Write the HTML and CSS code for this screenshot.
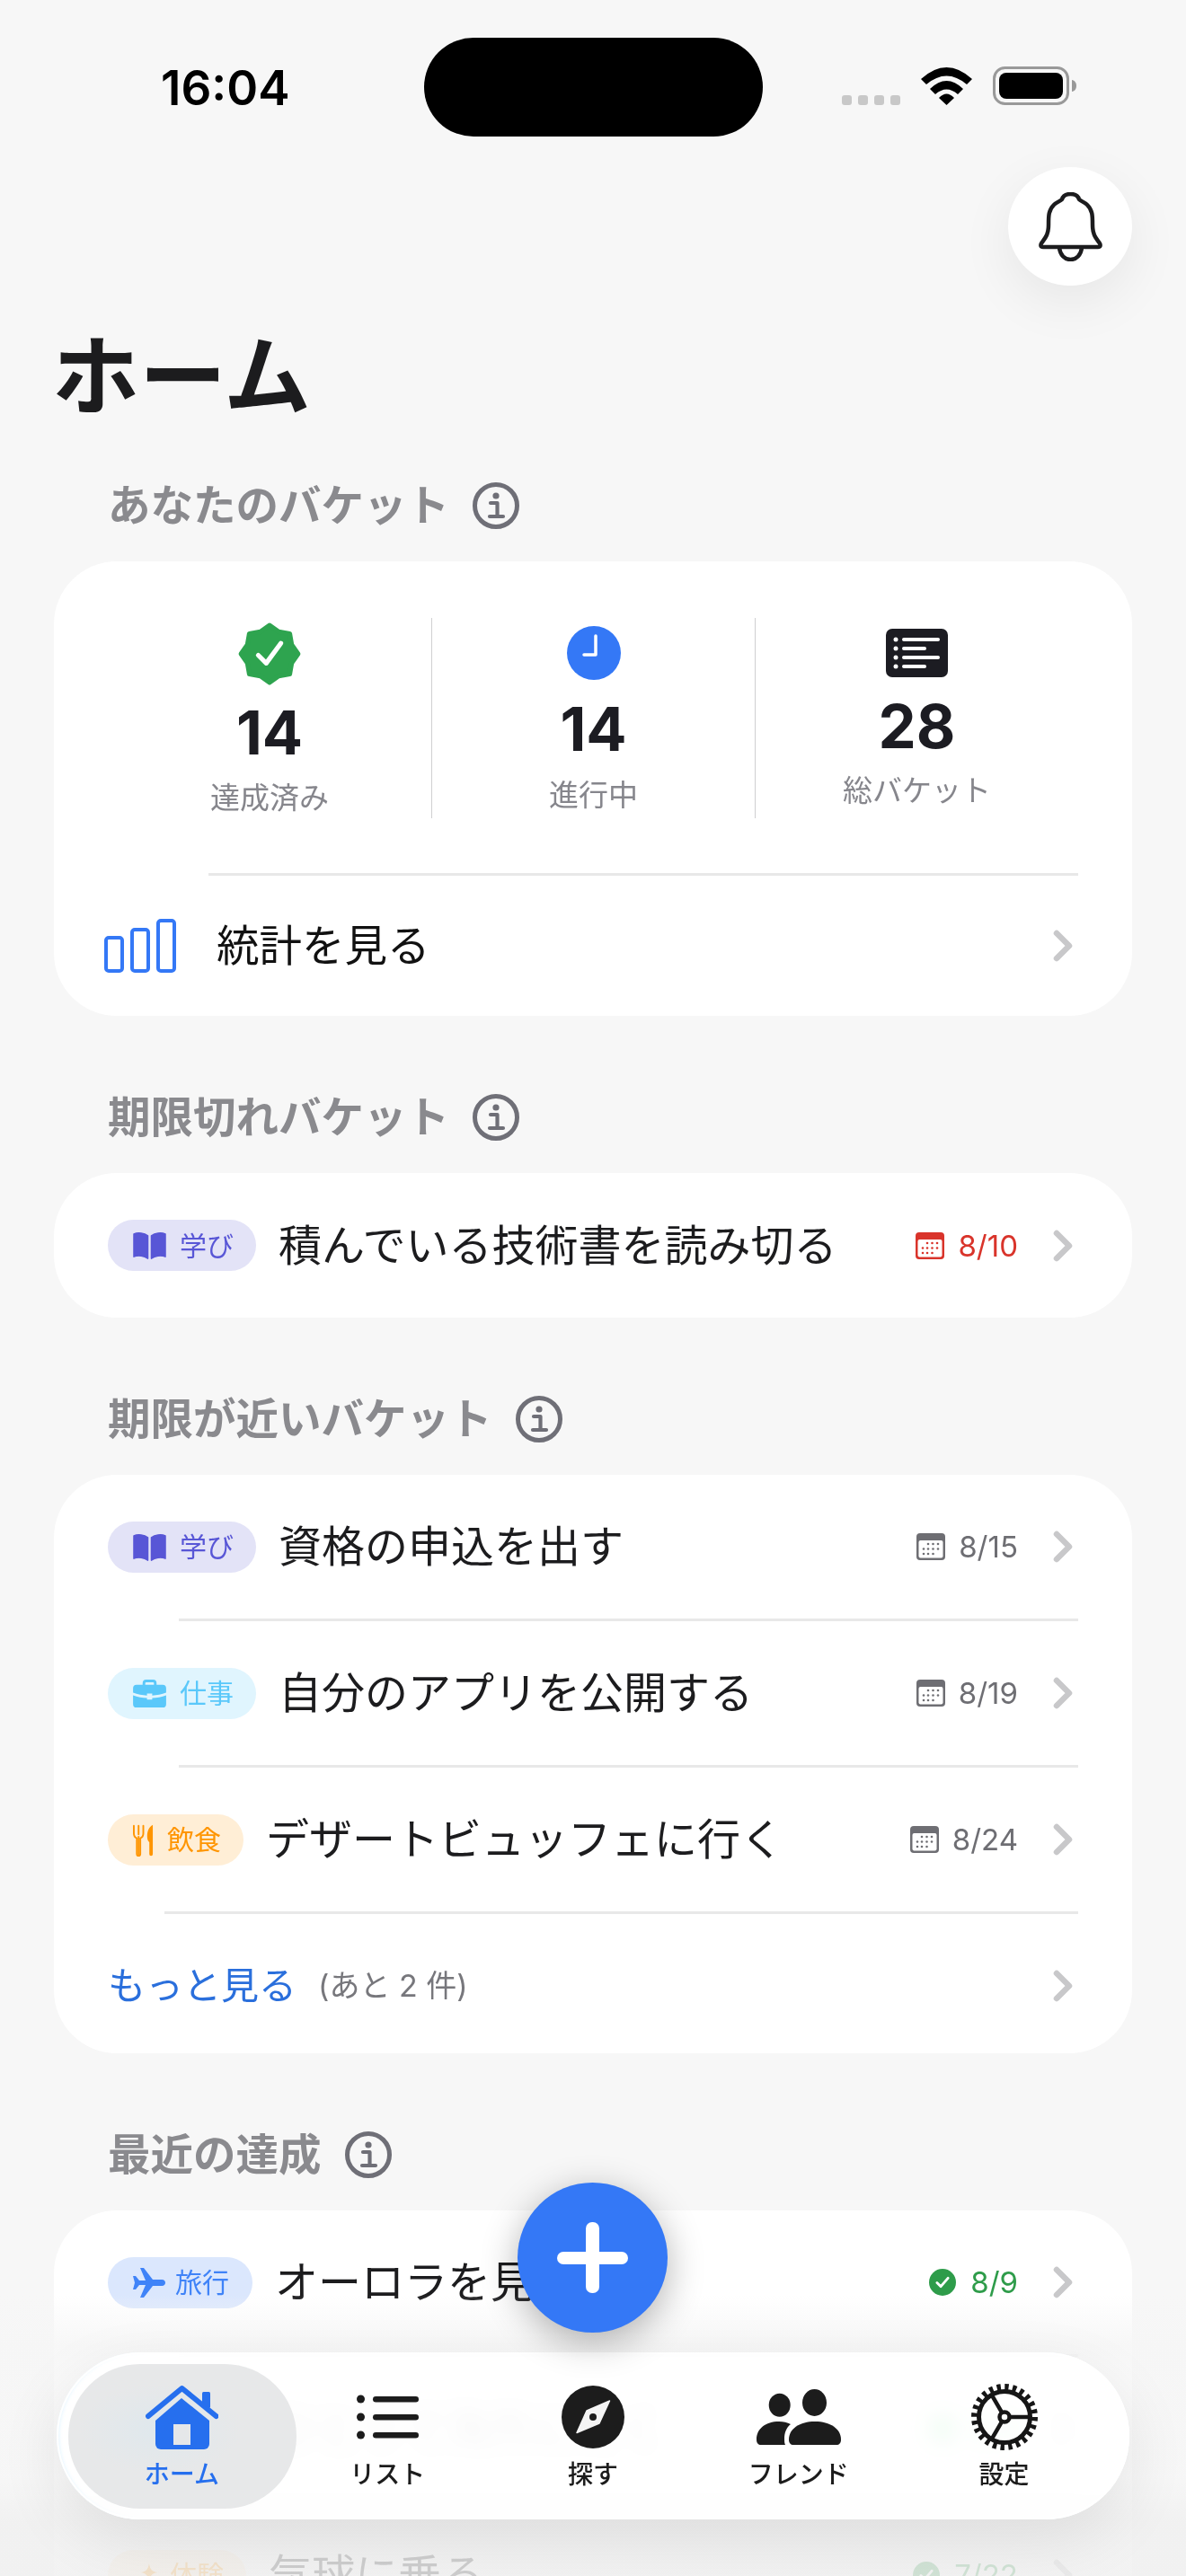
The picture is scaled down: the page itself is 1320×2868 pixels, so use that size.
FILE: index.html
```html
<!DOCTYPE html>
<html lang="ja">
<head>
<meta charset="utf-8">
<title>ホーム</title>
<link rel="stylesheet" href="styles.css">
</head>
<body>
<svg class="defs" width="0" height="0" aria-hidden="true">
  <defs>
    <symbol id="info" viewBox="0 0 52 52">
      <circle cx="26" cy="26" r="23.5" fill="none" stroke="currentColor" stroke-width="5"/>
      <circle cx="26" cy="15" r="3.6" fill="currentColor"/>
      <path d="M20 23h7.5v14M19 38h15" fill="none" stroke="currentColor" stroke-width="4.2" stroke-linecap="round" stroke-linejoin="round"/>
    </symbol>
    <symbol id="chev" viewBox="0 0 22 36">
      <path d="M4 4 18 18 4 32" fill="none" stroke="#c8c8ca" stroke-width="6.5" stroke-linecap="round" stroke-linejoin="round"/>
    </symbol>
    <symbol id="cal" viewBox="0 0 32 30">
      <rect width="32" height="30" rx="4" fill="currentColor"/>
      <rect x="2.5" y="8" width="27" height="19.5" rx="2" fill="#fff"/>
      <g fill="currentColor">
        <circle cx="13" cy="12" r="1.3"/><circle cx="18.500" cy="12" r="1.3"/><circle cx="24" cy="12" r="1.3"/>
        <circle cx="8" cy="17.500" r="1.3"/><circle cx="13" cy="17.500" r="1.3"/><circle cx="18.500" cy="17.500" r="1.3"/><circle cx="24" cy="17.500" r="1.3"/>
        <circle cx="8" cy="23" r="1.3"/><circle cx="13" cy="23" r="1.3"/><circle cx="18.500" cy="23" r="1.3"/>
      </g>
    </symbol>
    <symbol id="done" viewBox="0 0 32 32">
      <circle cx="16" cy="16" r="16" fill="currentColor"/>
      <path d="M9.500 16.500 14 21l8.500-10" fill="none" stroke="#fff" stroke-width="3" stroke-linecap="round" stroke-linejoin="round"/>
    </symbol>
    <symbol id="book" viewBox="0 0 38 30">
      <path d="M17 4C13 1 6 0 1 2v26c5-2 12-1 16 2zM21 4c4-3 11-4 16-2v26c-5-2-12-1-16 2z" fill="currentColor" stroke="currentColor" stroke-width="1.500" stroke-linejoin="round"/>
    </symbol>
    <symbol id="case" viewBox="0 0 38 32">
      <rect x="12.500" y="1.500" width="13" height="8" rx="2.500" fill="none" stroke="currentColor" stroke-width="3"/>
      <path d="M4 6h30a4 4 0 0 1 4 4v5c-5 2-11 3-16 3.200V16h-6v2.200C11 18 5 17 0 15v-5a4 4 0 0 1 4-4z" fill="currentColor"/>
      <path d="M0 18c5 2 11 3 16 3.200V23h6v-1.800c5-.2 11-1.200 16-3.200v10a4 4 0 0 1-4 4H4a4 4 0 0 1-4-4z" fill="currentColor"/>
    </symbol>
    <symbol id="food" viewBox="0 0 24 37">
      <path d="M1 2v9c0 3 2 5 3.500 5.500V35a2 2 0 0 0 4 0V16.500C10 16 12 14 12 11V2M6.500 2v10" fill="none" stroke="currentColor" stroke-width="2" stroke-linecap="round"/>
      <path d="M5.500 14h2v22h-2z" fill="currentColor"/>
      <path d="M23 1c-4 2-6.500 7-6.500 13 0 4 1 6 2.500 7v14a2 2 0 0 0 4 0z" fill="currentColor"/>
    </symbol>
    <symbol id="plane" viewBox="0 0 36 33">
      <path d="M0 9h3l4 5h7L8 0h4l10 13h10c3 0 4 2 4 3.500S35 20 32 20H22L12 33H8l6-14H7l-4 5H0l2-7.500z" fill="currentColor"/>
    </symbol>
    <symbol id="spark" viewBox="0 0 36 36">
      <path d="M22 2c1 8 4 11 11 12-7 1-10 4-11 12-1-8-4-11-11-12 7-1 10-4 11-12zM8 20c.6 4 2 6 6 6.500-4 .6-5.400 2.500-6 7-.6-4.500-2-6.400-6-7 4-.5 5.400-2.500 6-6.500z" fill="currentColor"/>
    </symbol>
  </defs>
</svg>

<header class="status">
  <div class="time">16:04</div>
  <div class="island"></div>
  <div class="status-right">
    <div class="cell-dots"><i></i><i></i><i></i><i></i></div>
    <svg class="wifi" viewBox="0 0 57 42"><path d="M0 13Q28.500-13 57 13L51 19Q28.500 0 6 19ZM10 24Q28.500 6 47 24L41 30Q28.500 19 16 30ZM20 34Q28.500 25 37 34L28.500 42Z"/></svg>
    <svg class="battery" viewBox="0 0 93 43"><rect x="1.500" y="1.500" width="82" height="40" rx="12" fill="none" stroke="#999" stroke-width="3"/><rect x="7" y="7" width="71" height="29" rx="8"/><path d="M88 15c3 .5 5 3 5 6.500S91 27.500 88 28z" fill="#999"/></svg>
  </div>
</header>

<div class="top">
  <button class="bell" type="button" aria-label="通知">
    <svg class="bell-icon" viewBox="0 0 71 77"><path d="M5 61H66C69 61 69 59 68 57 63 50 60 47 60 36 60 26 60 20 54 14 51 11 47 10 45 8 44 4 40 2 35.500 2 31 2 27 4 26 8 24 10 20 11 17 14 11 20 11 26 11 36 11 47 8 50 3 57 2 59 2 61 5 61ZM23 62C24 70 29 75 35.500 75 42 75 47 70 48 62" fill="none" stroke="#1c1c1e" stroke-width="4.500" stroke-linejoin="round"/></svg>
  </button>
</div>

<h1 class="title">ホーム</h1>

<main>
  <section class="section section-first">
    <h2 class="head">あなたのバケット<svg class="info"><use href="#info"/></svg></h2>
    <div class="card">
      <div class="stats">
        <div class="stat stat-a">
          <svg class="ic-badge" viewBox="-50 -50 100 100"><polygon points="43,0 33.300,13.800 30.400,30.400 13.800,33.300 0,43 -13.800,33.300 -30.400,30.400 -33.300,13.800 -43,0 -33.300,-13.800 -30.400,-30.400 -13.800,-33.300 0,-43 13.800,-33.300 30.400,-30.400 33.300,-13.800" fill="#2ea44f" stroke="#2ea44f" stroke-width="7" stroke-linejoin="round"/><path d="M-17 2-5 14 17-16" fill="none" stroke="#fff" stroke-width="7" stroke-linecap="round" stroke-linejoin="round"/></svg>
          <div class="num">14</div>
          <div class="lab">達成済み</div>
        </div>
        <div class="stat stat-b">
          <svg class="ic-clock" viewBox="0 0 60 60"><circle cx="30" cy="30" r="30" fill="#3478f6"/><path d="M32 11V32H19" fill="none" stroke="#fff" stroke-width="3.500" stroke-linecap="round" stroke-linejoin="round"/></svg>
          <div class="num">14</div>
          <div class="lab">進行中</div>
        </div>
        <div class="stat stat-c">
          <svg class="ic-list" viewBox="0 0 69 54"><rect width="69" height="54" rx="7" fill="#1c1c22"/><g fill="#fff"><circle cx="11" cy="12" r="2.500"/><circle cx="11" cy="22" r="2.500"/><circle cx="11" cy="32" r="2.500"/><circle cx="11" cy="42" r="2.500"/><rect x="18" y="10" width="42" height="4" rx="2"/><rect x="18" y="20" width="27" height="4" rx="2"/><rect x="18" y="30" width="42" height="4" rx="2"/><rect x="18" y="40" width="27" height="4" rx="2"/></g></svg>
          <div class="num">28</div>
          <div class="lab">総バケット</div>
        </div>
      </div>
      <div class="sep sep-stats"></div>
      <div class="row row-link">
        <svg class="ic-bars" viewBox="0 0 80 60"><g fill="none" stroke="#3478f6" stroke-width="4"><rect x="2" y="21" width="18" height="37" rx="3"/><rect x="31" y="12" width="18" height="46" rx="3"/><rect x="60" y="2" width="18" height="56" rx="3"/></g></svg>
        <span class="row-title">統計を見る</span>
        <svg class="chev"><use href="#chev"/></svg>
      </div>
    </div>
  </section>

  <section class="section">
    <h2 class="head">期限切れバケット<svg class="info"><use href="#info"/></svg></h2>
    <div class="card">
      <div class="row row-item">
        <span class="chip chip-study"><svg class="i-book"><use href="#book"/></svg>学び</span>
        <span class="item-title">積んでいる技術書を読み切る</span>
        <span class="date date-over"><svg class="i-cal"><use href="#cal"/></svg>8/10</span>
        <svg class="chev"><use href="#chev"/></svg>
      </div>
    </div>
  </section>

  <section class="section">
    <h2 class="head">期限が近いバケット<svg class="info"><use href="#info"/></svg></h2>
    <div class="card">
      <div class="row row-item">
        <span class="chip chip-study"><svg class="i-book"><use href="#book"/></svg>学び</span>
        <span class="item-title">資格の申込を出す</span>
        <span class="date"><svg class="i-cal"><use href="#cal"/></svg>8/15</span>
        <svg class="chev"><use href="#chev"/></svg>
      </div>
      <div class="sep sep-item"></div>
      <div class="row row-item">
        <span class="chip chip-work"><svg class="i-book"><use href="#case"/></svg>仕事</span>
        <span class="item-title">自分のアプリを公開する</span>
        <span class="date"><svg class="i-cal"><use href="#cal"/></svg>8/19</span>
        <svg class="chev"><use href="#chev"/></svg>
      </div>
      <div class="sep sep-item"></div>
      <div class="row row-item">
        <span class="chip chip-food"><svg class="i-food"><use href="#food"/></svg>飲食</span>
        <span class="item-title">デザートビュッフェに行く</span>
        <span class="date"><svg class="i-cal"><use href="#cal"/></svg>8/24</span>
        <svg class="chev"><use href="#chev"/></svg>
      </div>
      <div class="sep sep-food"></div>
      <div class="row row-item row-more">
        <span class="more">もっと見る</span>
        <span class="more-count">(あと 2 件)</span>
        <svg class="chev chev-end"><use href="#chev"/></svg>
      </div>
    </div>
  </section>

  <section class="section">
    <h2 class="head">最近の達成<svg class="info"><use href="#info"/></svg></h2>
    <div class="card">
      <div class="row row-item">
        <span class="chip chip-travel"><svg class="i-plane"><use href="#plane"/></svg>旅行</span>
        <span class="item-title">オーロラを見に行く</span>
        <span class="date date-done"><svg class="i-cal"><use href="#done"/></svg>8/9</span>
        <svg class="chev"><use href="#chev"/></svg>
      </div>
      <div class="sep sep-item"></div>
      <div class="row row-item">
        <span class="chip chip-travel"><svg class="i-plane"><use href="#plane"/></svg>旅行</span>
        <span class="item-title">ひとりで海外に行く</span>
        <span class="date date-done"><svg class="i-cal"><use href="#done"/></svg>8/3</span>
        <svg class="chev"><use href="#chev"/></svg>
      </div>
      <div class="sep sep-item"></div>
      <div class="row row-item">
        <span class="chip chip-exp"><svg class="i-book"><use href="#spark"/></svg>体験</span>
        <span class="item-title">気球に乗る</span>
        <span class="date date-done"><svg class="i-cal"><use href="#done"/></svg>7/22</span>
        <svg class="chev"><use href="#chev"/></svg>
      </div>
    </div>
  </section>
</main>

<div class="fade"></div>

<nav class="tabbar">
  <a class="tab tab-active">
    <svg class="tab-icon i-home" viewBox="0 0 81 72"><path d="M40 15 11 40V66a6 6 0 0 0 6 6H65a6 6 0 0 0 6-6V40Z" fill="#266fee"/><path d="M3 35 40.500 4 78.500 35" fill="none" stroke="#266fee" stroke-width="6" stroke-linecap="round" stroke-linejoin="round"/><rect x="63" y="8" width="9" height="18" rx="1.500" fill="#266fee"/><rect x="31" y="44" width="19" height="23" fill="#e5e7e9"/></svg>
    <span>ホーム</span>
  </a>
  <a class="tab">
    <svg class="tab-icon i-tlist" viewBox="0 0 69 50"><g fill="#1c1c1c"><circle cx="4.500" cy="5" r="4.500"/><circle cx="4.500" cy="25" r="4.500"/><circle cx="4.500" cy="45" r="4.500"/><rect x="18" y="2" width="51" height="6.500" rx="3.250"/><rect x="18" y="22" width="51" height="6.500" rx="3.250"/><rect x="18" y="42" width="51" height="6.500" rx="3.250"/></g></svg>
    <span>リスト</span>
  </a>
  <a class="tab">
    <svg class="tab-icon i-compass" viewBox="-35 -35 70 70"><circle r="35" fill="#1c1c1c"/><path d="M18.500-18 7 7-18 17.500-7-7Z" fill="#f4f4f4" stroke="#f4f4f4" stroke-width="1.500" stroke-linejoin="round"/><circle r="4" fill="#1c1c1c"/></svg>
    <span>探す</span>
  </a>
  <a class="tab">
    <svg class="tab-icon i-friends" viewBox="0 0 94 62"><g fill="#1c1c1c"><ellipse cx="64.500" cy="15" rx="13.500" ry="15"/><ellipse cx="25.700" cy="17.700" rx="12" ry="13"/><path d="M36 56C36 44 48 36 65 36 82 36 94 44 94 56 94 60 92 62 89 62H41C38 62 36 60 36 56Z"/><path d="M0 56C0 44 10 36 25 36 30 36 34 37 38 39 33 43 31 49 31 55 31 58 31 60 32 62H5C2 62 0 60 0 56Z"/></g></svg>
    <span>フレンド</span>
  </a>
  <a class="tab">
    <svg class="tab-icon i-gear" viewBox="-37 -37 74 74"><g fill="none" stroke="#161616"><circle r="33" stroke-width="8" stroke-dasharray="4.300 4.340"/><circle r="28.500" stroke-width="5"/><circle r="5.500" stroke-width="4.500"/><path d="M5.500 0H28M-2.800-4.800-14-24.200M-2.800 4.800-14 24.200" stroke-width="4.500"/></g></svg>
    <span>設定</span>
  </a>
</nav>

<button class="fab" type="button" aria-label="追加"></button>
</body>
</html>
```

FILE: styles.css
```css
* { box-sizing: border-box; }
html, body { margin: 0; padding: 0; }
body {
  width: 1320px;
  height: 2868px;
  position: relative;
  overflow: hidden;
  background: #f7f7f7;
  color: #1c1c1e;
  font-family: Inter, "Noto Sans CJK JP", sans-serif;
}
.defs { position: absolute; }

/* status bar */
.status {
  height: 186px;
  padding: 42px 0 0 179px;
  display: flex;
  align-items: flex-start;
}
.time {
  width: 293px;
  padding-top: 31px;
  font-size: 53px;
  line-height: 50px;
  font-weight: 600;
  color: #000;
}
.island { width: 377px; height: 110px; border-radius: 55px; background: #000; }
.status-right { margin: 33px 0 0 88px; height: 42px; display: flex; align-items: flex-end; gap: 23px; }
.cell-dots { display: flex; gap: 7px; }
.cell-dots i { width: 11px; height: 11px; border-radius: 3px; background: #c8c8c8; }
.wifi { width: 57px; height: 42px; display: block; }
.battery { width: 93px; height: 43px; display: block; margin-left: 0; }

/* bell */
.top { display: flex; justify-content: flex-end; padding-right: 60px; }
.bell {
  width: 138px; height: 132px;
  border: 0; padding: 0;
  border-radius: 50%;
  background: #fff;
  box-shadow: 0 18px 60px rgba(0,0,0,.07);
  display: flex; align-items: center; justify-content: center;
}
.bell-icon { width: 71px; height: 77px; }

.title {
  margin: 46px 0 0 58px;
  font-size: 97px;
  line-height: 110px;
  font-weight: 700;
  color: #1c1c1e;
}

/* sections */
.section { margin: 83px 60px 0; }
.section-first { margin-top: 59px; }
.head {
  margin: 0 0 32px 60px;
  height: 60px;
  display: flex;
  align-items: center;
  gap: 26px;
  font-size: 47.500px;
  line-height: 60px;
  font-weight: 700;
  color: #8a8a8e;
}
.info { width: 52px; height: 52px; color: #6f6f77; flex: none; }
.card { background: #fff; border-radius: 70px; }

/* stats */
.stats { display: grid; grid-template-columns: repeat(3, 360px); padding: 63px 60px 0; height: 347px; }
.stat { height: 223px; display: flex; flex-direction: column; align-items: center; border-left: 1px solid #cfcfd1; }
.stat-a { border-left: 0; }
.num { font-size: 67px; line-height: 72px; font-weight: 700; color: #1c1c22; }
.lab { font-size: 33px; line-height: 44px; color: #86868c; }
.ic-badge { width: 74px; height: 74px; margin-top: 3px; }
.ic-clock { width: 60px; height: 60px; margin-top: 9px; }
.ic-list { width: 69px; height: 54px; margin-top: 12px; }
.stat-a .num { margin-top: 15px; }
.stat-a .lab { margin-top: 14px; }
.stat-b .num { margin-top: 19px; }
.stat-b .lab { margin-top: 15px; }
.stat-c .num { margin-top: 19px; }
.stat-c .lab { margin-top: 13px; }

.sep { height: 3px; background: #e8e8e8; margin-right: 60px; }
.sep-stats { margin-left: 172px; }
.sep-item { margin-left: 139px; }
.sep-food { margin-left: 123px; }

/* rows */
.row { display: flex; align-items: center; }
.row-link { height: 156px; padding: 0 66px 0 56px; }
.ic-bars { width: 80px; height: 60px; margin-right: 45px; flex: none; }
.row-title { flex: 1; font-size: 47.500px; line-height: 60px; color: #111; }
.chev { width: 22px; height: 36px; flex: none; }
.chev-end { margin-left: auto; }

.row-item { height: 160px; padding: 0 66px 0 60px; }
.row-more { height: 155px; padding-top: 5px; }
.section:nth-of-type(2) .row-item { height: 161px; }
.item-title { flex: 1; margin-left: 25px; font-size: 48px; line-height: 60px; color: #1c1c1e; white-space: nowrap; }

.chip {
  height: 57px;
  padding: 0 25px 0 28px;
  border-radius: 29px;
  display: inline-flex;
  align-items: center;
  gap: 15px;
  flex: none;
  font-size: 30px;
  line-height: 40px;
}
.chip-study { background: #e3e3f7; color: #5856d6; }
.chip-work { background: #e0f5fe; color: #5ac8fa; }
.chip-food { background: #ffeed6; color: #ff9500; }
.chip-travel { background: #dbe7fd; color: #3f83f8; gap: 11px; padding-right: 26px; }
.chip-exp { background: #ffeed6; color: #ff9500; padding-left: 24px; gap: 8px; }
.i-book { width: 37px; height: 31px; }
.i-food { width: 23px; height: 37px; }
.i-plane { width: 36px; height: 33px; }

.date {
  display: inline-flex;
  align-items: center;
  gap: 15px;
  margin-right: 39px;
  font-size: 33px;
  line-height: 40px;
  color: #6e6e73;
  flex: none;
}
.i-cal { width: 32px; height: 30px; }
.date-over { color: #d9342b; }
.date-done { color: #2e9c4a; }

.more { font-size: 42px; line-height: 60px; color: #2a6fdc; }
.more-count { margin-left: 24px; font-size: 34px; line-height: 40px; color: #77777c; }

/* overlays */
.fade {
  position: absolute;
  left: 0; right: 0; bottom: 0;
  height: 313px;
  background: linear-gradient(to bottom, rgba(245,245,245,0) 0%, rgba(246,246,246,.88) 18%, rgba(246,246,246,.65) 30%, rgba(246,246,246,.65) 65%, rgba(240,240,240,.84) 81%, rgba(240,240,240,.84) 100%);
}
.tabbar {
  position: absolute;
  left: 63px; top: 2619px;
  width: 1194px; height: 186px;
  padding: 0 25px;
  border-radius: 93px;
  display: flex;
  isolation: isolate;
  background: rgba(255,255,255,.9);
  -webkit-backdrop-filter: blur(10px) saturate(3);
  backdrop-filter: blur(10px) saturate(3);
  box-shadow: 0 22px 70px rgba(0,0,0,.09), inset 0 0 0 2px #fff, inset 4px 0 4px -2px rgba(170,225,255,.45);
}
.tab {
  position: relative;
  width: 229px;
  display: flex;
  flex-direction: column;
  align-items: center;
  padding-top: 35px;
  color: #1c1c1c;
  font-size: 28px;
  line-height: 28px;
  font-weight: 500;
}
.tab span { position: absolute; top: 122px; white-space: nowrap; }
.tab-icon { height: 74px; display: block; }
.tab-active { color: #266fee; }
.tab-active::before {
  content: "";
  position: absolute;
  z-index: -1;
  left: -12px; right: -13px; top: 13px; bottom: 12px;
  border-radius: 80px;
  background: radial-gradient(ellipse 90px 50px at 40% 45%, #dfe8ed 0%, #e7e8e9 100%);
}
.i-home { width: 81px; height: 72px; margin-top: 1px; }
.i-tlist { width: 69px; height: 50px; margin-top: 12px; }
.i-compass { width: 70px; height: 70px; margin-top: 2px; }
.i-friends { width: 94px; height: 62px; margin-top: 6px; }
.i-gear { width: 74px; height: 74px; }

.fab {
  position: absolute;
  left: 576px; top: 2430px;
  width: 167px; height: 167px;
  border: 0; padding: 0;
  border-radius: 50%;
  background: #3478f6;
  box-shadow: 0 10px 40px rgba(0,0,0,.3);
}
.fab::before, .fab::after {
  content: "";
  position: absolute;
  background: #fff;
  border-radius: 7px;
}
.fab::before { left: 44px; top: 77px; width: 79px; height: 14px; }
.fab::after { left: 76px; top: 44px; width: 15px; height: 79px; }
```
